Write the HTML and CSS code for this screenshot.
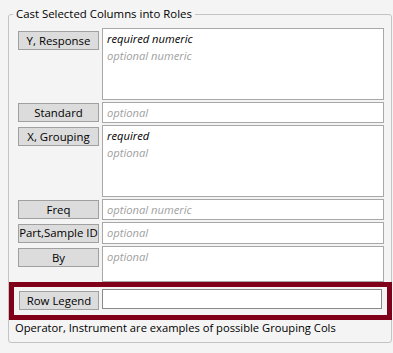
FILE: index.html
```html
<!DOCTYPE html>
<html>
<head>
  <title>Cast Selected Columns into Roles</title>
  <link rel="stylesheet" href="styles.css">
</head>
<body>
  <fieldset class="roles">
    <legend>Cast Selected Columns into Roles</legend>
    <div class="rows">
      <div class="row tall">
        <button class="role first">Y, Response</button>
        <div class="box">
          <div class="req">required numeric</div>
          <div class="opt">optional numeric</div>
        </div>
      </div>
      <div class="row">
        <button class="role">Standard</button>
        <div class="box"><div class="opt">optional</div></div>
      </div>
      <div class="row tall">
        <button class="role">X, Grouping</button>
        <div class="box">
          <div class="req">required</div>
          <div class="opt">optional</div>
        </div>
      </div>
      <div class="row">
        <button class="role">Freq</button>
        <div class="box"><div class="opt">optional numeric</div></div>
      </div>
      <div class="row part">
        <button class="role">Part,Sample ID</button>
        <div class="box"><div class="opt">optional</div></div>
      </div>
      <div class="row by">
        <button class="role">By</button>
        <div class="box"><div class="opt">optional</div></div>
      </div>
    </div>
    <div class="legend-row">
      <button class="role">Row Legend</button>
      <div class="box empty"></div>
    </div>
    <p class="note">Operator, Instrument are examples of possible Grouping Cols</p>
  </fieldset>
</body>
</html>
```

FILE: styles.css
```css
body {
  margin: 0;
  background-color: #f4f4f4;
  font-family: "Open Sans", "Noto Sans", sans-serif;
  font-size: 11.2px;
  color: #000;
}

.roles {
  box-sizing: border-box;
  width: 384px;
  height: 337px;
  margin: 6px 0 0 8px;
  padding: 0 7px 0 9px;
  border: 1px solid #c4c4c4;
  border-radius: 3px;
}

.roles legend {
  margin-left: -5px;
  padding: 0 3px;
  font-size: 11.4px;
  line-height: 16px;
}

.rows {
  display: flex;
  flex-direction: column;
  gap: 2px;
  padding-top: 6px;
}

.row {
  display: flex;
  align-items: center;
  gap: 3px;
  height: 21px;
}

.row.tall {
  height: 72px;
  align-items: flex-start;
}

.row.part {
  height: 22px;
}

.row.by {
  height: 36px;
  align-items: flex-start;
}

.row.tall .role,
.row.by .role {
  margin-top: 2px;
}

.row.tall .role.first {
  margin-top: 3px;
}

.role {
  box-sizing: border-box;
  width: 81px;
  height: 19px;
  flex: none;
  padding: 0;
  background-color: #dcdcdc;
  border: 1px solid #a0a0a0;
  font-family: inherit;
  font-size: 11.4px;
  line-height: 16px;
  color: #000;
  white-space: nowrap;
}

.box {
  box-sizing: border-box;
  flex: 1;
  height: 100%;
  padding: 1px 4px 0;
  background-color: #fff;
  border: 1px solid #a8a8a8;
  font-style: italic;
  line-height: 17px;
}

.req {
  color: #000;
}

.opt {
  color: #a0a0a0;
}

.legend-row {
  display: flex;
  align-items: flex-start;
  gap: 3px;
  height: 38px;
  box-sizing: border-box;
  margin: 0 -8px 0 -9px;
  padding: 2px 5px 0 5px;
  border: 5px solid #80001a;
}

.legend-row .role {
  width: 80px;
  margin-top: 2px;
}

.legend-row .box {
  height: 20px;
  border-color: #8a8a8a;
}

.note {
  margin: 0 0 0 -3px;
  line-height: 16px;
}
```
